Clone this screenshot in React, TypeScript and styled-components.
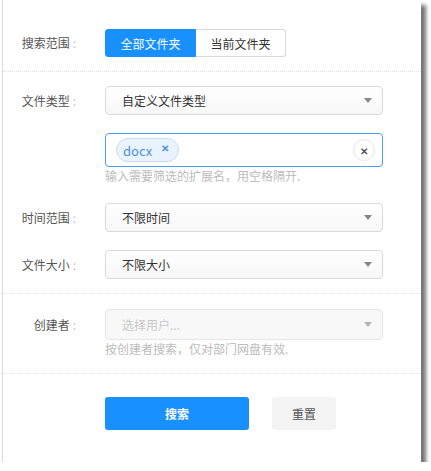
import React from 'react';
import styled, { createGlobalStyle } from 'styled-components';

const GlobalStyle = createGlobalStyle`
  html, body {
    margin: 0;
    padding: 0;
    background: #fff;
  }

  body {
    font-family: "Noto Sans CJK SC", "Noto Sans", sans-serif;
    font-size: 12px;
    color: #333;
  }
`;

const Panel = styled.div`
  box-sizing: border-box;
  width: 419px;
  height: 462px;
  margin-left: 2px;
  border-left: 1px solid #dcdcdc;
  background: #fff;
  box-shadow: 5px 5px 4px rgba(0, 0, 0, 0.55);
`;

const Section = styled.section<{ $top: number; $bottom: number; $last?: boolean }>`
  display: flex;
  flex-direction: column;
  padding: ${(p) => p.$top}px 0 ${(p) => p.$bottom}px;
  border-bottom: ${(p) => (p.$last ? 'none' : '1px dotted #e2e2e2')};
`;

const Row = styled.div<{ $gap?: number }>`
  display: flex;
  align-items: center;
  margin-top: ${(p) => p.$gap ?? 0}px;
`;

const Label = styled.div`
  width: 73px;
  flex-shrink: 0;
  margin-right: 29px;
  text-align: right;
  color: #555;
  line-height: 16px;
  white-space: nowrap;
`;

const Colon = styled.span`
  margin-left: 3px;
  color: #c4c4c4;
`;

const Segmented = styled.div`
  display: flex;
  height: 28px;
`;

const SegButton = styled.button<{ $active?: boolean }>`
  box-sizing: border-box;
  width: ${(p) => (p.$active ? 91 : 90)}px;
  height: 28px;
  padding: 0;
  font: inherit;
  font-size: 12px;
  cursor: pointer;
  color: ${(p) => (p.$active ? '#fff' : '#333')};
  background: ${(p) => (p.$active ? '#1890ff' : '#fff')};
  border: 1px solid ${(p) => (p.$active ? '#1890ff' : '#d9d9d9')};
  border-radius: ${(p) => (p.$active ? '3px 0 0 3px' : '0 3px 3px 0')};
  border-left-width: ${(p) => (p.$active ? 1 : 0)}px;
`;

const Select = styled.div<{ $disabled?: boolean; $h?: number }>`
  box-sizing: border-box;
  display: flex;
  align-items: center;
  justify-content: space-between;
  width: 278px;
  height: ${(p) => p.$h ?? 29}px;
  padding: 0 10px 0 16px;
  border: 1px solid ${(p) => (p.$disabled ? '#e6e6e6' : '#dadada')};
  border-radius: 4px;
  background: ${(p) => (p.$disabled ? '#f8f8f8' : 'linear-gradient(#ffffff, #f7f7f7)')};
  color: ${(p) => (p.$disabled ? '#c8c8c8' : '#333')};
`;

const Caret = styled.span<{ $disabled?: boolean }>`
  width: 0;
  height: 0;
  border-left: 4px solid transparent;
  border-right: 4px solid transparent;
  border-top: 5px solid ${(p) => (p.$disabled ? '#b5b5b5' : '#888')};
`;

const TagInput = styled.div`
  box-sizing: border-box;
  display: flex;
  align-items: center;
  justify-content: space-between;
  width: 278px;
  height: 34px;
  padding: 0 7px 0 10px;
  border: 1px solid #4a9ff5;
  border-radius: 4px;
  background: #fff;
`;

const Tag = styled.span`
  box-sizing: border-box;
  display: inline-flex;
  align-items: center;
  height: 24px;
  padding: 0 9px 0 6px;
  border: 1px solid #c4ddfa;
  border-radius: 12px;
  background: #e9f3fe;
  color: #4a8fe3;
  font-size: 13px;
`;

const TagClose = styled.span`
  margin-left: 9px;
  margin-top: -5px;
  font-size: 10px;
  font-weight: bold;
`;

const ClearButton = styled.span`
  box-sizing: border-box;
  display: flex;
  align-items: center;
  justify-content: center;
  width: 22px;
  height: 22px;
  border: 1px solid #e8e8e8;
  border-radius: 50%;
  color: #555;
  font-size: 10px;
  font-weight: bold;
`;

const Hint = styled.div`
  margin-left: 102px;
  margin-top: 1px;
  line-height: 16px;
  color: #bcbcbc;
`;

const Actions = styled.div`
  display: flex;
  gap: 23px;
  padding: 23px 0 0 102px;
`;

const ActionButton = styled.button<{ $primary?: boolean }>`
  height: 33px;
  width: ${(p) => (p.$primary ? 144 : 64)}px;
  padding: 0;
  font: inherit;
  font-size: 12px;
  font-weight: ${(p) => (p.$primary ? 'bold' : 'normal')};
  color: ${(p) => (p.$primary ? '#fff' : '#555')};
  background: ${(p) => (p.$primary ? '#1890ff' : '#f4f4f4')};
  border: none;
  border-radius: 3px;
  cursor: pointer;
`;

const FieldLabel: React.FC<{ text: string }> = ({ text }) => (
  <Label>
    {text}
    <Colon>:</Colon>
  </Label>
);

export default function App() {
  return (
    <>
      <GlobalStyle />
      <Panel>
        <Section $top={29} $bottom={14}>
          <Row>
            <FieldLabel text="搜索范围" />
            <Segmented>
              <SegButton $active>全部文件夹</SegButton>
              <SegButton>当前文件夹</SegButton>
            </Segmented>
          </Row>
        </Section>

        <Section $top={14} $bottom={14}>
          <Row>
            <FieldLabel text="文件类型" />
            <Select>
              自定义文件类型
              <Caret />
            </Select>
          </Row>
          <Row $gap={18}>
            <Label />
            <TagInput>
              <Tag>
                docx
                <TagClose>✕</TagClose>
              </Tag>
              <ClearButton>✕</ClearButton>
            </TagInput>
          </Row>
          <Hint>输入需要筛选的扩展名，用空格隔开.</Hint>
          <Row $gap={19}>
            <FieldLabel text="时间范围" />
            <Select>
              不限时间
              <Caret />
            </Select>
          </Row>
          <Row $gap={18}>
            <FieldLabel text="文件大小" />
            <Select>
              不限大小
              <Caret />
            </Select>
          </Row>
        </Section>

        <Section $top={15} $bottom={16}>
          <Row>
            <FieldLabel text="创建者" />
            <Select $disabled $h={31}>
              选择用户...
              <Caret $disabled />
            </Select>
          </Row>
          <Hint>按创建者搜索，仅对部门网盘有效.</Hint>
        </Section>

        <Section $top={0} $bottom={0} $last>
          <Actions>
            <ActionButton $primary>搜索</ActionButton>
            <ActionButton>重置</ActionButton>
          </Actions>
        </Section>
      </Panel>
    </>
  );
}
